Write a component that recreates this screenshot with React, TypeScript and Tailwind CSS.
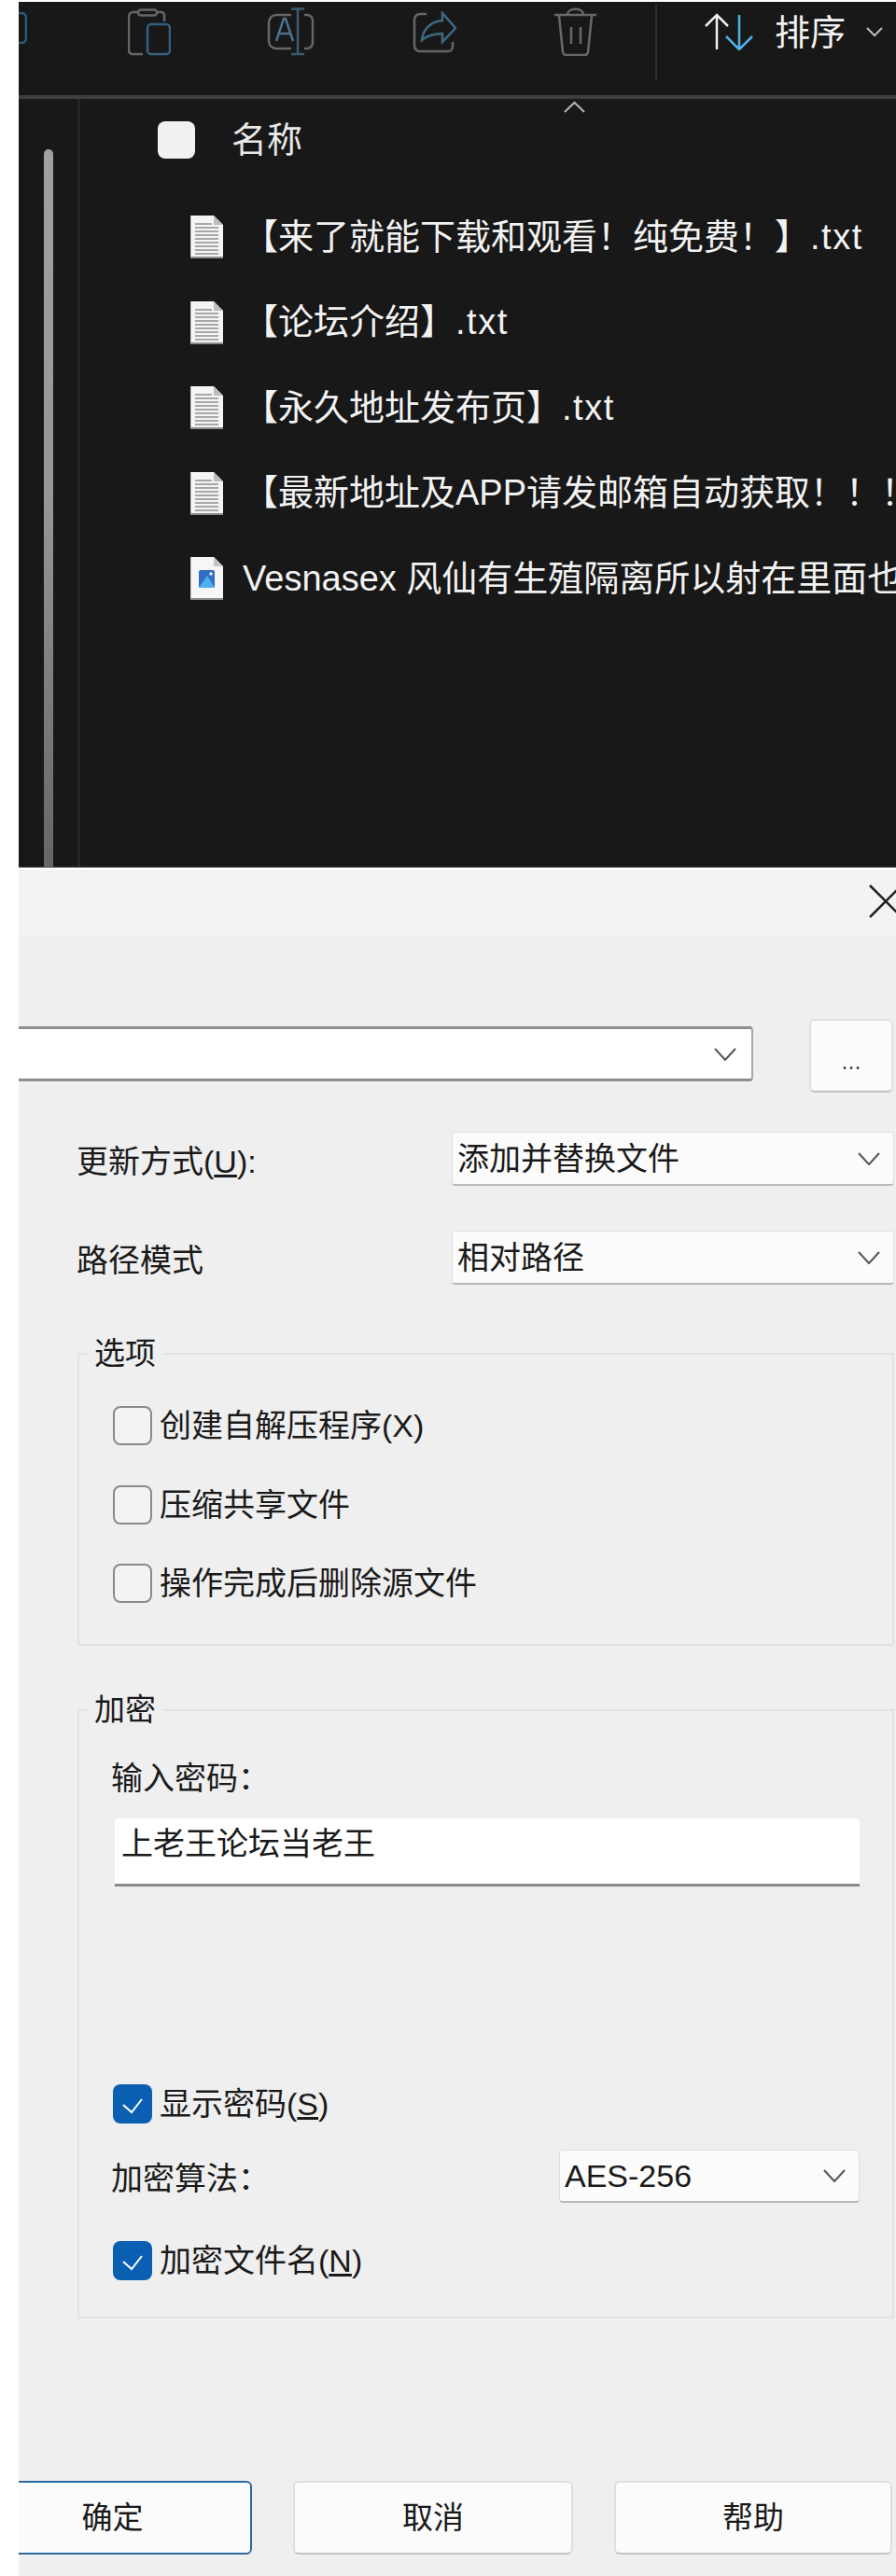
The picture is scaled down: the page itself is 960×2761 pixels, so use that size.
import { ReactNode } from "react";

function Chevron({ className }: { className: string }) {
  return (
    <svg className={className} viewBox="0 0 24 14" fill="none" stroke="#555" strokeWidth="2">
      <path d="M1 1l11 12L23 1" />
    </svg>
  );
}

function TxtIcon() {
  return (
    <svg className="w-[35px] h-[46px] shrink-0" viewBox="0 0 35 46">
      <path d="M0 0h25l10 10v36H0z" fill="#f4f4f4" />
      <path d="M25 0l10 10H25z" fill="#bdbdbd" />
      <path d="M0 45h35" stroke="#8c8c8c" strokeWidth="2" />
      <path d="M0 0v46" stroke="#9a9a9a" strokeWidth="1" />
      <path d="M5 9h18M5 13h25M5 17h25M5 21h25M5 25h25M5 29h25M5 33h25M5 37h25M5 41h25" stroke="#a8a8a8" strokeWidth="2" />
    </svg>
  );
}

function ImageIcon() {
  return (
    <svg className="w-[35px] h-[46px] shrink-0" viewBox="0 0 35 46">
      <path d="M0 0h25l10 10v36H0z" fill="#f6f6f8" />
      <path d="M25 0l10 10H25z" fill="#c4c4c4" />
      <path d="M0 45h35" stroke="#8c8c8c" strokeWidth="2" />
      <path d="M0 0v46" stroke="#9a9a9a" strokeWidth="1" />
      <rect x="9" y="14" width="17" height="19" rx="2" fill="#2f6fc4" />
      <path d="M9 33l9-13 8 13z" fill="#4fb0ec" />
      <circle cx="22" cy="18" r="1.8" fill="#e8f2ff" />
    </svg>
  );
}

function Box({ checked }: { checked?: boolean }) {
  if (checked) {
    return (
      <span className="w-[42px] h-[42px] shrink-0 rounded-lg bg-[#0b5fb3] flex">
        <svg className="w-[42px] h-[42px]" viewBox="0 0 42 42" fill="none" stroke="#fff" strokeWidth="2">
          <path d="M11 22l9 8 11-14" />
        </svg>
      </span>
    );
  }
  return <span className="w-[42px] h-[42px] shrink-0 rounded-lg border-2 border-[#8a8a8a] bg-[#f3f3f3]" />;
}

function CheckRow({ checked, children }: { checked?: boolean; children: ReactNode }) {
  return (
    <div className="flex items-center gap-2 text-[34px] leading-[38px] text-[#1a1a1a] whitespace-nowrap">
      <Box checked={checked} />
      <span>{children}</span>
    </div>
  );
}

function Select({ label, className }: { label: string; className: string }) {
  return (
    <div className={`flex items-center justify-between bg-[#fbfbfb] rounded border border-[#dedede] border-b-2 border-b-[#b8b8b8] pl-[5px] pr-[14px] text-[34px] text-[#1a1a1a] ${className}`}>
      <span className="pt-px">{label}</span>
      <Chevron className="w-6 h-[14px]" />
    </div>
  );
}

function Group({ title, className, children }: { title: string; className: string; children: ReactNode }) {
  return (
    <div className={`relative ml-[63px] mr-0.5 border-2 border-[#e2e2e2] pl-9 ${className}`}>
      <span className="absolute left-[8px] -top-[19px] bg-[#efefef] px-2 text-[33px] leading-[36px] text-[#1a1a1a]">{title}</span>
      {children}
    </div>
  );
}

function DialogButton({ label, className }: { label: string; className: string }) {
  return (
    <div className={`h-[79px] flex items-center justify-center rounded-md bg-[#fbfbfb] border-2 text-[33px] text-[#1a1a1a] ${className}`}>
      {label}
    </div>
  );
}

const rows = ["【来了就能下载和观看！纯免费！】", "【论坛介绍】", "【永久地址发布页】", "【最新地址及APP请发邮箱自动获取！！！】"];

export default function App() {
  return (
    <div className="w-[960px] h-[2761px] flex flex-col bg-white pl-5 pt-0.5 overflow-hidden font-['Liberation_Sans','Noto_Sans_CJK_SC',sans-serif]">
      {/* explorer window */}
      <div className="h-[928px] shrink-0 flex flex-col bg-[#181818] border-b border-[#555]">
        <div className="h-[104px] shrink-0 flex items-start border-b-4 border-[#3e3e3e] text-[#f2f2f2]">
          <svg className="w-[9px] h-[34px] mt-[11px]" viewBox="0 0 9 34" fill="none" stroke="#2b5a78" strokeWidth="2.5">
            <path d="M0 1h3a5 5 0 0 1 5 5v22a5 5 0 0 1-5 5H0" />
          </svg>
          <svg className="w-[46px] h-[52px] ml-[108px] mt-[7px]" viewBox="0 0 46 52" fill="none" strokeWidth="2.5">
            <g stroke="#666">
              <path d="M11 4H6a5 5 0 0 0-5 5v36a4 4 0 0 0 4 4h11" />
              <path d="M31 4h5a3 3 0 0 1 3 3v7" />
              <rect x="11" y="1.5" width="20" height="6" rx="3" />
            </g>
            <rect x="21" y="17" width="24" height="32" rx="4" stroke="#35607f" />
          </svg>
          <svg className="w-[52px] h-[52px] ml-[103px] mt-1.5" viewBox="0 0 52 52" fill="none" strokeWidth="2.5">
            <g stroke="#666">
              <path d="M26 8H10a8 8 0 0 0-8 8v20a8 8 0 0 0 8 8h16" />
              <path d="M40 8h3a6 6 0 0 1 6 6v24a6 6 0 0 1-6 6h-3" />
            </g>
            <path d="M33 1v49M26 1.500h14M26 50h14" stroke="#3b5c72" />
            <path d="M10 36l8-24h2l8 24M13 28h12" stroke="#4a7390" />
          </svg>
          <svg className="w-[47px] h-[46px] ml-[104px] mt-2.5" viewBox="0 0 47 46" fill="none" strokeWidth="2.5">
            <path d="M15 3H8a6 6 0 0 0-6 6v28a6 6 0 0 0 6 6h30a5 5 0 0 0 5-5v-5" stroke="#666" />
            <path d="M10 31c1-12 10-20 22-21V2l14 16-14 15v-9c-9 0-16 2-22 7z" stroke="#3d6a80" />
          </svg>
          <svg className="w-[47px] h-[52px] ml-[104px] mt-1.5" viewBox="0 0 47 52" fill="none" stroke="#686868" strokeWidth="2.5">
            <path d="M1 8h45M15 7c1-7 16-7 17 0" />
            <path d="M6 9l4 39a4 4 0 0 0 4 3h19a4 4 0 0 0 4-3l4-39" />
            <path d="M19 21v18M29 21v18" />
          </svg>
          <div className="w-0.5 h-[82px] mt-0.5 ml-[62px] bg-[#2e2e2e]" />
          <svg className="w-[52px] h-10 ml-[51px] mt-3" viewBox="0 0 52 40" fill="none" strokeWidth="2.5">
            <path d="M13 39V2M1 14L13 2l12 12" stroke="#f0f0f0" />
            <path d="M37 2v37M23 25l14 14 14-14" stroke="#4fb3e8" />
          </svg>
          <span className="ml-[23px] mt-3.5 text-[38px] leading-[38px] whitespace-nowrap">排序</span>
          <svg className="w-[18px] h-[11px] ml-[22px] mt-[27px]" viewBox="0 0 18 11" fill="none" stroke="#bbb" strokeWidth="2">
            <path d="M1 1l8 8 8-8" />
          </svg>
        </div>

        <div className="flex-1 flex min-h-0">
          <div className="w-[63px] shrink-0 pl-[27px] pt-[54px] flex">
            <div className="w-2.5 rounded-t-full bg-linear-to-b from-[#a0a0a0] via-[#969696] to-[#666]" />
          </div>
          <div className="w-[3px] shrink-0 bg-[#262626]" />
          <div className="relative flex-1 min-w-0 overflow-hidden text-[#f2f2f2]">
            <svg className="absolute left-[518px] top-0.5 w-[23px] h-[13px]" viewBox="0 0 23 13" fill="none" stroke="#b5b5b5" strokeWidth="2">
              <path d="M1 12L11.500 2 22 12" />
            </svg>
            <div className="h-[102.5px] flex items-start pt-6 pl-[83px]">
              <span className="w-10 h-10 rounded-lg bg-[#f1f1f1]" />
              <span className="ml-[39px] text-[38px] leading-10 text-[#e8e8e8]">名称</span>
            </div>
            {rows.map((r) => (
              <div key={r} className="h-[91.5px] flex items-center pl-[118px] gap-[21px] text-[38px] whitespace-nowrap">
                <TxtIcon />
                <span>
                  {r}
                  <span className="tracking-[1.5px]">.txt</span>
                </span>
              </div>
            ))}
            <div className="h-[91.5px] flex items-center pl-[118px] gap-[21px] text-[38px] whitespace-nowrap">
              <ImageIcon />
              <span>Vesnasex 风仙有生殖隔离所以射在里面也</span>
            </div>
          </div>
        </div>
      </div>

      {/* archive dialog */}
      <div className="flex-1 flex flex-col overflow-hidden border-t-2 border-white bg-[#efefef] text-[#1a1a1a]">
        <div className="h-[71px] shrink-0 bg-[#f3f3f3] flex justify-end pt-4">
          <svg className="w-[29px] h-[36px]" viewBox="0 0 29 36" fill="none" stroke="#222" strokeWidth="2.5">
            <path d="M1 1l34 34M35 1L1 35" />
          </svg>
        </div>

        <div className="mt-[89px] h-[79px] flex items-start">
          <div className="mt-2 w-[787px] h-[59px] flex items-center justify-end pr-[16px] bg-white border-y-[3px] border-r-2 border-y-[#8f8f8f] border-r-[#a8a8a8] rounded-r-sm">
            <Chevron className="w-6 h-[14px]" />
          </div>
          <div className="ml-[60px] w-[90px] h-[79px] flex items-center justify-center pt-3 rounded-md bg-[#fbfbfb] border-2 border-[#e0e0e0] border-b-[#c0c0c0] text-[25px] text-[#444]">
            ...
          </div>
        </div>

        <div className="mt-[42px] flex items-center pl-[62px]">
          <span className="w-[402px] text-[34px] pt-[6px] whitespace-nowrap">
            更新方式(<span className="underline">U</span>):
          </span>
          <Select label="添加并替换文件" className="w-[474px] h-[58px]" />
        </div>
        <div className="mt-[48px] flex items-center pl-[62px]">
          <span className="w-[402px] text-[34px] pt-[6px] whitespace-nowrap">路径模式</span>
          <Select label="相对路径" className="w-[474px] h-[58px]" />
        </div>

        <Group title="选项" className="mt-[73px] h-[314px] pt-[55px] flex flex-col gap-[42.5px]">
          <CheckRow>创建自解压程序(X)</CheckRow>
          <CheckRow>压缩共享文件</CheckRow>
          <CheckRow>操作完成后删除源文件</CheckRow>
        </Group>

        <Group title="加密" className="mt-[68px] h-[653px] pt-[54px] pr-[35px] flex flex-col">
          <span className="text-[34px] leading-[36px] -ml-0.5">输入密码：</span>
          <div className="mt-[25px] ml-0.5 h-[73px] pl-[7px] pt-[5px] bg-white border-b-[3px] border-b-[#8a8a8a] rounded-t-sm text-[34px] leading-[44px]">
            上老王论坛当老王
          </div>
          <div className="mt-[212px]">
            <CheckRow checked>
              显示密码(<span className="underline">S</span>)
            </CheckRow>
          </div>
          <div className="mt-[28px] flex items-center justify-between">
            <span className="text-[34px] pt-[6px] -ml-0.5">加密算法：</span>
            <Select label="AES-256" className="w-[322px] h-[57px]" />
          </div>
          <div className="mt-[41px]">
            <CheckRow checked>
              加密文件名(<span className="underline">N</span>)
            </CheckRow>
          </div>
        </Group>

        <div className="mt-[174px] flex gap-[44px]">
          <DialogButton label="确定" className="-ml-[49px] w-[299px] shrink-0 border-[#2a6a9e]" />
          <DialogButton label="取消" className="w-[300px] shrink-0 border-[#dedede] border-b-[#c4c4c4]" />
          <DialogButton label="帮助" className="w-[298px] shrink-0 border-[#dedede] border-b-[#c4c4c4]" />
        </div>
      </div>
    </div>
  );
}
